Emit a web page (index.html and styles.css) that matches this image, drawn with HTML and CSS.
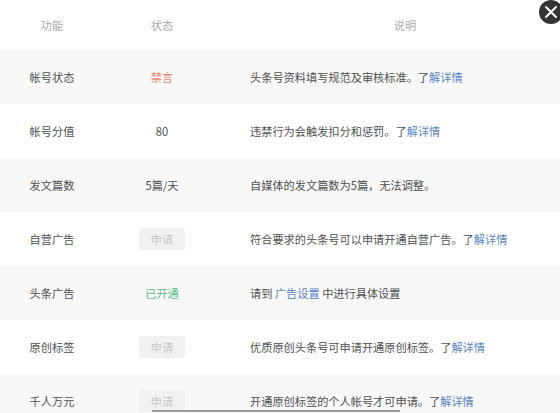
FILE: index.html
```html
<!DOCTYPE html>
<html lang="zh-CN">
<head>
  <meta charset="UTF-8">
  <title>账号权限</title>
  <link rel="stylesheet" href="styles.css">
</head>
<body>
<div class="panel">
  <div class="row head">
    <div class="c1">功能</div>
    <div class="c2">状态</div>
    <div class="c3 center">说明</div>
  </div>
  <div class="row odd">
    <div class="c1">帐号状态</div>
    <div class="c2"><span class="ban">禁言</span></div>
    <div class="c3">头条号资料填写规范及审核标准。了<a class="link">解详情</a></div>
  </div>
  <div class="row">
    <div class="c1">帐号分值</div>
    <div class="c2">80</div>
    <div class="c3">违禁行为会触发扣分和惩罚。了<a class="link">解详情</a></div>
  </div>
  <div class="row odd">
    <div class="c1">发文篇数</div>
    <div class="c2">5篇/天</div>
    <div class="c3">自媒体的发文篇数为5篇，无法调整。</div>
  </div>
  <div class="row">
    <div class="c1">自营广告</div>
    <div class="c2"><span class="btn">申请</span></div>
    <div class="c3">符合要求的头条号可以申请开通自营广告。了<a class="link">解详情</a></div>
  </div>
  <div class="row odd">
    <div class="c1">头条广告</div>
    <div class="c2"><span class="ok">已开通</span></div>
    <div class="c3">请到 <a class="link">广告设置</a> 中进行具体设置</div>
  </div>
  <div class="row">
    <div class="c1">原创标签</div>
    <div class="c2"><span class="btn">申请</span></div>
    <div class="c3">优质原创头条号可申请开通原创标签。了<a class="link">解详情</a></div>
  </div>
  <div class="row odd">
    <div class="c1">千人万元</div>
    <div class="c2"><span class="btn">申请</span></div>
    <div class="c3">开通原创标签的个人帐号才可申请。了<a class="link">解详情</a></div>
  </div>
  <div class="close">
    <svg width="14" height="14" viewBox="0 0 14 14">
      <path d="M2 2 L12 12 M12 2 L2 12" stroke="#fff" stroke-width="2" stroke-linecap="round"/>
    </svg>
  </div>
  <div class="scrollbar"></div>
</div>
</body>
</html>
```

FILE: styles.css
```css
html, body {
  margin: 0;
  padding: 0;
  background: #fff;
}
.panel {
  position: relative;
  width: 560px;
  height: 413px;
  overflow: hidden;
  font-family: "Noto Sans CJK SC", "Noto Sans", sans-serif;
  font-size: 11.2px;
  color: #505050;
}
.row {
  display: flex;
  align-items: center;
  height: 54px;
}
.row.head {
  height: 50px;
  color: #aaa;
}
.row.odd {
  background-color: #f8f8f8;
}
.c1 {
  width: 104px;
  text-align: center;
}
.c2 {
  width: 116px;
  text-align: center;
}
.c3 {
  flex: 1;
  padding-left: 30px;
}
.c3.center {
  text-align: center;
}
.ban { color: #e58a6f; }
.ok { color: #5cbf86; }
.link { color: #5a85c6; }
.btn {
  display: inline-block;
  width: 46px;
  height: 22px;
  line-height: 22px;
  background-color: #f1f1f1;
  color: #c8c8c8;
  border-radius: 2px;
}
.close {
  position: absolute;
  top: 0;
  left: 539px;
  width: 24px;
  height: 24px;
  border-radius: 50%;
  background-color: #333;
  display: flex;
  align-items: center;
  justify-content: center;
}
.scrollbar {
  position: absolute;
  left: 152px;
  top: 410px;
  width: 248px;
  height: 2px;
  background-color: #9a9a9a;
}
```
